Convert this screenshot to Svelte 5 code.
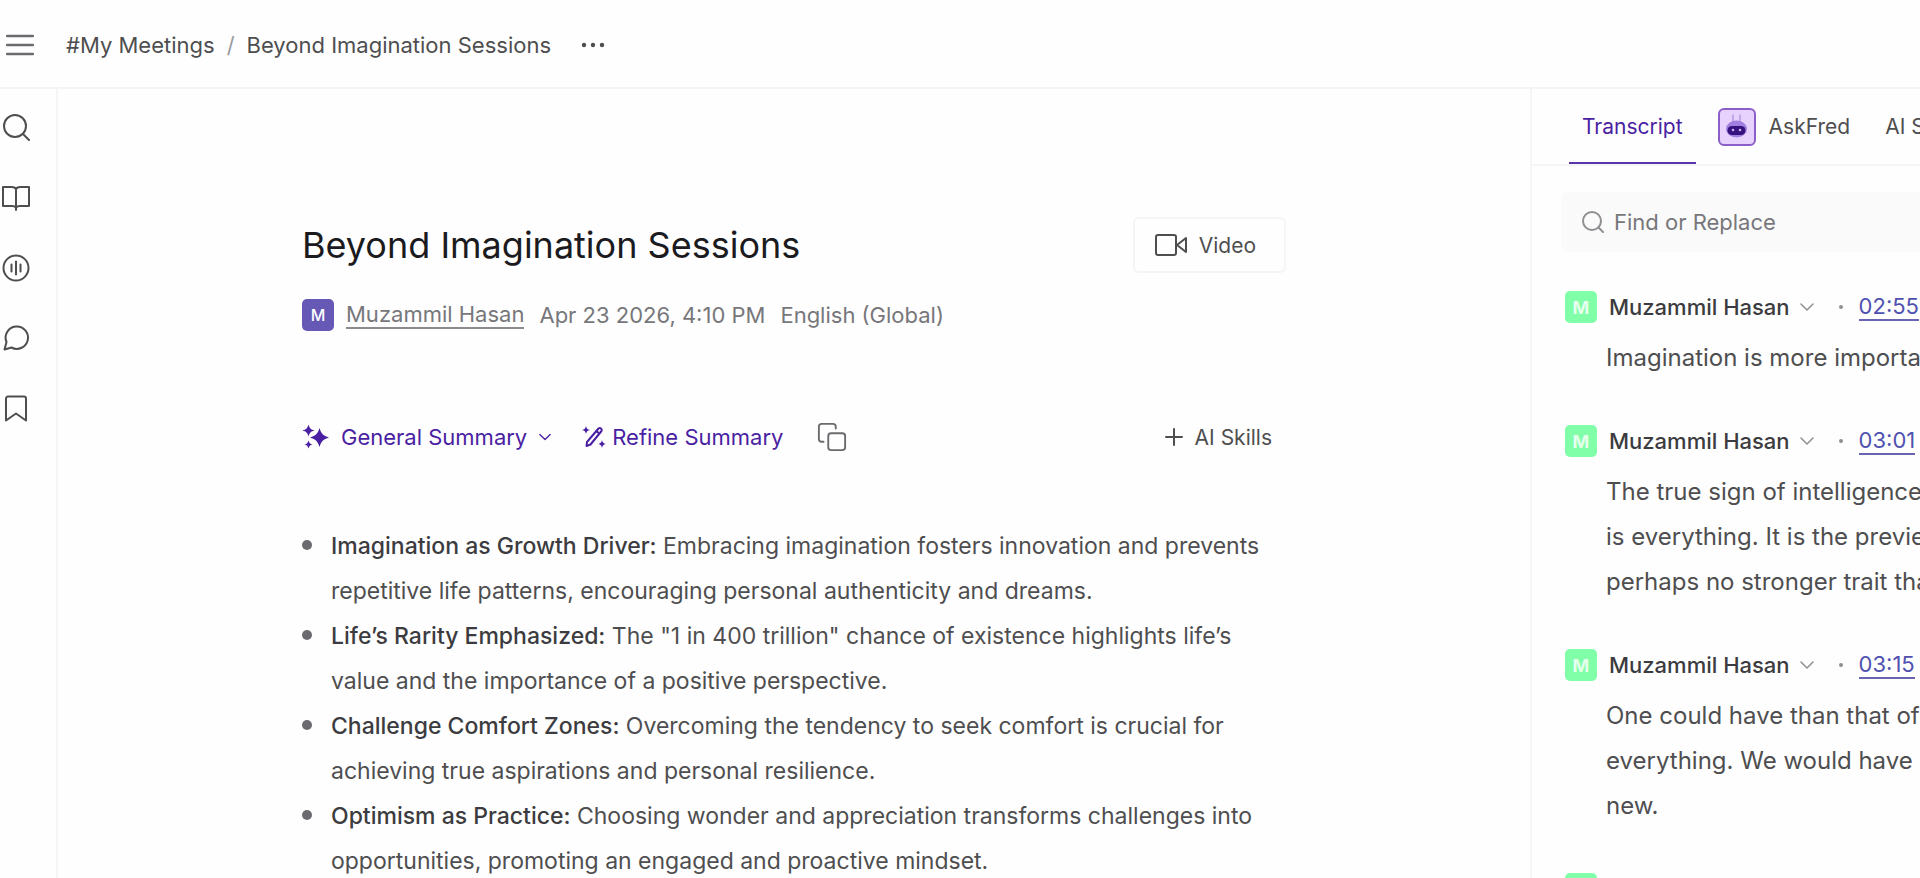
<script>
    const navItems = ['Search', 'Notebook', 'Recordings', 'Comments', 'Bookmarks'];

    const summary = [
        {
            title: 'Imagination as Growth Driver:',
            text: 'Embracing imagination fosters innovation and prevents repetitive life patterns, encouraging personal authenticity and dreams.'
        },
        {
            title: 'Life’s Rarity Emphasized:',
            text: 'The "1 in 400 trillion" chance of existence highlights life’s value and the importance of a positive perspective.'
        },
        {
            title: 'Challenge Comfort Zones:',
            text: 'Overcoming the tendency to seek comfort is crucial for achieving true aspirations and personal resilience.'
        },
        {
            title: 'Optimism as Practice:',
            text: 'Choosing wonder and appreciation transforms challenges into opportunities, promoting an engaged and proactive mindset.'
        }
    ];

    const transcript = [
        { time: '02:55', lines: ['Imagination is more important'] },
        {
            time: '03:01',
            lines: ['The true sign of intelligence', 'is everything. It is the preview', 'perhaps no stronger trait than']
        },
        {
            time: '03:15',
            lines: ['One could have than that of', 'everything. We would have', 'new.']
        },
        { time: '03:28', lines: [] }
    ];

    let query = '';
    let activeTab = 'transcript';
</script>

<div class="app">
    <header class="topbar">
        <button class="icon-button" aria-label="Menu">
            <svg class="menu-icon" viewBox="0 0 28 28">
                <path d="M1 5h26M1 14h26M1 23h26" />
            </svg>
        </button>
        <nav class="breadcrumb" aria-label="Breadcrumb">
            <a href="#meetings">#My Meetings</a>
            <span class="slash">/</span>
            <a href="#session">Beyond Imagination Sessions</a>
        </nav>
        <button class="icon-button" aria-label="More">
            <svg class="dots-icon" viewBox="0 0 26 26">
                <circle cx="3" cy="13" r="2.2" />
                <circle cx="12" cy="13" r="2.2" />
                <circle cx="21" cy="13" r="2.2" />
            </svg>
        </button>
    </header>

    <div class="body">
        <nav class="sidebar" aria-label="Main">
            {#each navItems as item}
                <button class="icon-button" aria-label={item}>
                    <svg class="nav-icon" viewBox="0 0 28 28">
                        {#if item === 'Search'}
                            <circle cx="13" cy="12" r="11" />
                            <path d="m21 20 6 6" />
                        {:else if item === 'Notebook'}
                            <path d="M14 4v22M14 5c-1-1.500-2.500-2-4-2H1v19h9c2 0 3.500.5 4 2 .5-1.500 2-2 4-2h9V3h-9c-1.500 0-3 .5-4 2z" />
                        {:else if item === 'Recordings'}
                            <circle cx="14" cy="14" r="12.500" />
                            <path d="M9.500 10.500v7M14 7.500v13M18.500 10.500v7" />
                        {:else if item === 'Comments'}
                            <path d="M2.500 25.500 4.500 18A11.200 11.200 0 1 1 9.500 23.500z" />
                        {:else}
                            <path d="M6 2.500h16a2 2 0 0 1 2 2v22l-10-7-10 7v-22a2 2 0 0 1 2-2z" />
                        {/if}
                    </svg>
                </button>
            {/each}
        </nav>

        <main class="notes">
            <article class="document">
                <div class="title-row">
                    <h1>Beyond Imagination Sessions</h1>
                    <button class="video-button">
                        <svg class="video-icon" viewBox="0 0 32 24">
                            <rect x="1" y="2" width="20" height="20" rx="2" />
                            <path d="m22 12 9-7v14z" />
                        </svg>
                        Video
                    </button>
                </div>

                <div class="meta">
                    <span class="avatar owner">M</span>
                    <a class="owner-name" href="#owner">Muzammil Hasan</a>
                    <span class="date">Apr 23 2026, 4:10 PM</span>
                    <span>English (Global)</span>
                </div>

                <div class="toolbar">
                    <button class="tool purple">
                        <svg class="sparkle-icon" viewBox="0 0 27 27">
                            <path d="M17.500 4c1.800 5.800 3.700 7.700 9.500 9.500-5.800 1.800-7.700 3.700-9.500 9.500-1.800-5.800-3.700-7.700-9.500-9.500 5.800-1.800 7.700-3.700 9.500-9.500z" />
                            <path d="M6.500.5c1 3.700 2.300 5 6 6-3.700 1-5 2.300-6 6-1-3.700-2.300-5-6-6 3.700-1 5-2.300 6-6z" />
                            <path d="M6.500 16.500c.7 2.500 1.500 3.300 4 4-2.500.7-3.300 1.500-4 4-.7-2.500-1.500-3.300-4-4 2.500-.7 3.300-1.500 4-4z" />
                        </svg>
                        General Summary
                        <svg class="chevron small" viewBox="0 0 14 14"><path d="m1 4 6 6 6-6" /></svg>
                    </button>
                    <button class="tool purple refine">
                        <svg class="wand-icon" viewBox="0 0 24 24">
                            <path class="line" d="M5 17 16.500 3.500a2 2 0 0 1 3 2.500L8.500 19.500l-4 1.500zM14.500 6l2.500 2.500" />
                            <path d="M4 1c.5 2.500 1.300 3.300 4 4-2.700.7-3.500 1.500-4 4-.5-2.500-1.300-3.300-4-4 2.700-.7 3.500-1.500 4-4z" />
                            <path d="M20 15c.4 2.400 1.200 3.200 3.500 4-2.300.8-3.100 1.600-3.500 4-.4-2.400-1.200-3.200-3.500-4 2.300-.8 3.100-1.600 3.500-4z" />
                        </svg>
                        Refine Summary
                    </button>
                    <button class="icon-button" aria-label="Copy summary">
                        <svg class="copy-icon" viewBox="0 0 32 32">
                            <rect x="12" y="12" width="18" height="18" rx="3" />
                            <path d="M7 21H5a3 3 0 0 1-3-3V5a3 3 0 0 1 3-3h12a3 3 0 0 1 3 3v2" />
                        </svg>
                    </button>
                    <button class="tool skills">
                        <svg class="plus-icon" viewBox="0 0 18 18"><path d="M9 1v16M1 9h16" /></svg>
                        AI Skills
                    </button>
                </div>

                <ul class="summary">
                    {#each summary as point}
                        <li><strong>{point.title}</strong> {point.text}</li>
                    {/each}
                </ul>
            </article>
        </main>

        <aside class="panel">
            <div class="tabs" role="tablist">
                <button class="tab" class:active={activeTab === 'transcript'} role="tab" aria-selected={activeTab === 'transcript'} on:click={() => (activeTab = 'transcript')}>
                    Transcript
                </button>
                <button class="tab" class:active={activeTab === 'fred'} role="tab" aria-selected={activeTab === 'fred'} on:click={() => (activeTab = 'fred')}>
                    <svg class="fred-icon" viewBox="0 0 38 38">
                        <rect x="1" y="1" width="36" height="36" rx="5" fill="#e6d2fc" stroke="#8a5fc9" stroke-width="2" />
                        <path d="M15 7v7M22 7v7" stroke="#b79be0" stroke-width="1.500" />
                        <ellipse cx="18.500" cy="21" rx="10.500" ry="8.500" fill="#a27ee0" stroke="none" />
                        <rect x="9.500" y="18" width="18" height="9" rx="4.500" fill="#36127e" stroke="none" />
                        <circle cx="15" cy="22" r="1.300" fill="#c9b0f5" stroke="none" />
                        <circle cx="22" cy="22" r="1.300" fill="#c9b0f5" stroke="none" />
                    </svg>
                    AskFred
                </button>
                <button class="tab" class:active={activeTab === 'soundbites'} role="tab" aria-selected={activeTab === 'soundbites'} on:click={() => (activeTab = 'soundbites')}>
                    AI Soundbites
                </button>
            </div>

            <label class="search">
                <svg class="search-icon" viewBox="0 0 22 22">
                    <circle cx="10" cy="10" r="9" />
                    <path d="m16.500 16.500 4.500 4.500" />
                </svg>
                <input type="text" placeholder="Find or Replace" aria-label="Find or Replace" bind:value={query} />
            </label>

            <div class="transcript">
                {#each transcript as entry}
                    <section class="entry">
                        <div class="speaker">
                            <span class="avatar">M</span>
                            <button class="speaker-name">
                                Muzammil Hasan
                                <svg class="chevron" viewBox="0 0 14 14"><path d="m1 4 6 6 6-6" /></svg>
                            </button>
                            <span class="dot"></span>
                            <a class="time" href="#t-{entry.time}">{entry.time}</a>
                        </div>
                        <p>
                            {#each entry.lines as line}
                                <span>{line}</span>
                            {/each}
                        </p>
                    </section>
                {/each}
            </div>
        </aside>
    </div>
</div>

<style>
    :global(body) {
        margin: 0;
        background: #fefefe;
    }

    .app {
        display: flex;
        flex-direction: column;
        height: 100vh;
        overflow: hidden;
        font-family: Inter, "Liberation Sans", sans-serif;
        font-size: 22px;
        color: #4e4e50;
        --border: #f5f5f6;
        --purple: #4a1fa3;
    }

    button {
        display: flex;
        align-items: center;
        padding: 0;
        border: none;
        background: none;
        font: inherit;
        color: inherit;
        white-space: nowrap;
        cursor: pointer;
    }

    a {
        color: inherit;
        text-decoration: none;
    }

    svg {
        display: block;
        flex: none;
        fill: none;
        stroke: currentColor;
        stroke-width: 2;
        stroke-linecap: round;
        stroke-linejoin: round;
    }

    .topbar {
        display: flex;
        align-items: center;
        flex: none;
        height: 89px;
        padding: 3px 0 0 6px;
        border-bottom: 2px solid var(--border);
        box-sizing: border-box;
    }

    .menu-icon {
        width: 28px;
        height: 28px;
        color: #6b6b6f;
        stroke-width: 2.5;
    }

    .breadcrumb {
        display: flex;
        gap: 12px;
        margin: 0 30px 0 32px;
    }

    .slash {
        color: #9a9a9e;
    }

    .dots-icon {
        width: 26px;
        height: 26px;
        fill: currentColor;
        stroke: none;
    }

    .body {
        display: flex;
        flex: 1;
        min-height: 0;
    }

    .sidebar {
        display: flex;
        flex-direction: column;
        flex: none;
        gap: 42px;
        width: 58px;
        padding: 25px 0 0 2px;
        border-right: 2px solid var(--border);
        box-sizing: border-box;
    }

    .nav-icon {
        width: 28px;
        height: 28px;
    }

    .notes {
        flex: 1;
        min-width: 0;
        overflow: hidden;
    }

    .document {
        max-width: 984px;
        margin: 0 auto;
        padding-top: 128px;
    }

    .title-row {
        display: flex;
        align-items: center;
        justify-content: space-between;
    }

    h1 {
        margin: 0;
        font-size: 36px;
        font-weight: 400;
        color: #1b1b1f;
    }

    .video-button {
        gap: 12px;
        height: 56px;
        padding: 0 28px 0 20px;
        border: 2px solid var(--border);
        border-radius: 6px;
        box-sizing: border-box;
        font-size: 21px;
    }

    .video-icon {
        width: 32px;
        height: 24px;
    }

    .meta {
        display: flex;
        align-items: center;
        margin-top: 26px;
        gap: 15px;
        color: #77777b;
    }

    .avatar {
        display: flex;
        align-items: center;
        justify-content: center;
        flex: none;
        width: 32px;
        height: 32px;
        border-radius: 5px;
        background: #80ffa8;
        color: #e4ffec;
        font-size: 18px;
        font-weight: 700;
    }

    .avatar.owner {
        margin-right: -3px;
        background: #6659b5;
        color: #fff;
        font-size: 16px;
        font-weight: 500;
    }

    .owner-name {
        border-bottom: 2px solid #8b8b8f;
    }

    .toolbar {
        display: flex;
        align-items: center;
        height: 32px;
        margin-top: 90px;
    }

    .tool {
        gap: 12px;
    }

    .purple {
        color: var(--purple);
    }

    .refine {
        gap: 6px;
        margin: 0 34px 0 31px;
    }

    .skills {
        margin-left: auto;
        margin-right: 14px;
        font-size: 21px;
    }

    .sparkle-icon {
        width: 27px;
        height: 27px;
        fill: currentColor;
        stroke: none;
    }

    .chevron {
        width: 14px;
        height: 14px;
        stroke-width: 1.5;
    }

    .chevron.small {
        width: 12px;
        height: 12px;
    }

    .wand-icon {
        width: 24px;
        height: 24px;
        fill: currentColor;
        stroke: none;
    }

    .wand-icon .line {
        fill: none;
        stroke: currentColor;
        stroke-width: 2;
    }

    .copy-icon {
        width: 30px;
        height: 30px;
        color: #6b6b6f;
    }

    .plus-icon {
        width: 18px;
        height: 18px;
    }

    .summary {
        margin: 71px 0 0;
        padding: 0;
        list-style: none;
        font-size: 23px;
        line-height: 45px;
    }

    .summary li {
        position: relative;
        padding-left: 29px;
    }

    .summary li::before {
        content: '';
        position: absolute;
        top: 16px;
        left: 0;
        width: 10px;
        height: 10px;
        border-radius: 50%;
        background: #6b6b6f;
    }

    .summary strong {
        font-weight: 500;
        color: #3c3c40;
    }

    .panel {
        display: flex;
        flex-direction: column;
        flex: none;
        width: 390px;
        border-left: 2px solid var(--border);
        box-sizing: border-box;
        overflow: hidden;
    }

    .tabs {
        display: flex;
        flex: none;
        gap: 22px;
        height: 77px;
        padding-left: 37px;
        border-bottom: 2px solid var(--border);
        box-sizing: border-box;
    }

    .tab {
        gap: 13px;
        flex: none;
        padding: 2px 13px 0 0;
        border-bottom: 2px solid transparent;
        font-size: 21px;
    }

    .tab:first-child {
        padding-left: 13px;
    }

    .tab.active {
        border-color: #5a34ad;
        color: var(--purple);
    }

    .fred-icon {
        width: 38px;
        height: 38px;
    }

    .search {
        display: flex;
        align-items: center;
        flex: none;
        gap: 10px;
        height: 60px;
        margin: 26px 0 0 29px;
        padding-left: 21px;
        border-radius: 8px 0 0 8px;
        background: #fafafa;
        color: #77777b;
    }

    .search-icon {
        width: 22px;
        height: 22px;
        color: #8f8f93;
    }

    .search input {
        flex: 1;
        min-width: 0;
        padding: 0;
        border: none;
        outline: none;
        background: none;
        font: inherit;
        color: inherit;
    }

    .search input::placeholder {
        color: #77777b;
        opacity: 1;
    }

    .transcript {
        display: flex;
        flex-direction: column;
        gap: 45px;
        margin-top: 39px;
        padding-left: 33px;
    }

    .speaker {
        display: flex;
        align-items: center;
        height: 32px;
    }

    .speaker-name {
        gap: 10px;
        margin-left: 12px;
        font-weight: 500;
        color: #3c3c40;
    }

    .speaker-name .chevron {
        color: #8f8f93;
    }

    .dot {
        flex: none;
        width: 4px;
        height: 4px;
        margin: 0 16px 0 25px;
        border-radius: 50%;
        background: #8f8f93;
    }

    .time {
        border-bottom: 2px solid #6a65b0;
        color: #4f51b0;
    }

    .entry p {
        margin: 12px 0 0 41px;
        font-size: 24px;
        line-height: 45px;
        white-space: nowrap;
    }

    .entry p span {
        display: block;
    }
</style>
